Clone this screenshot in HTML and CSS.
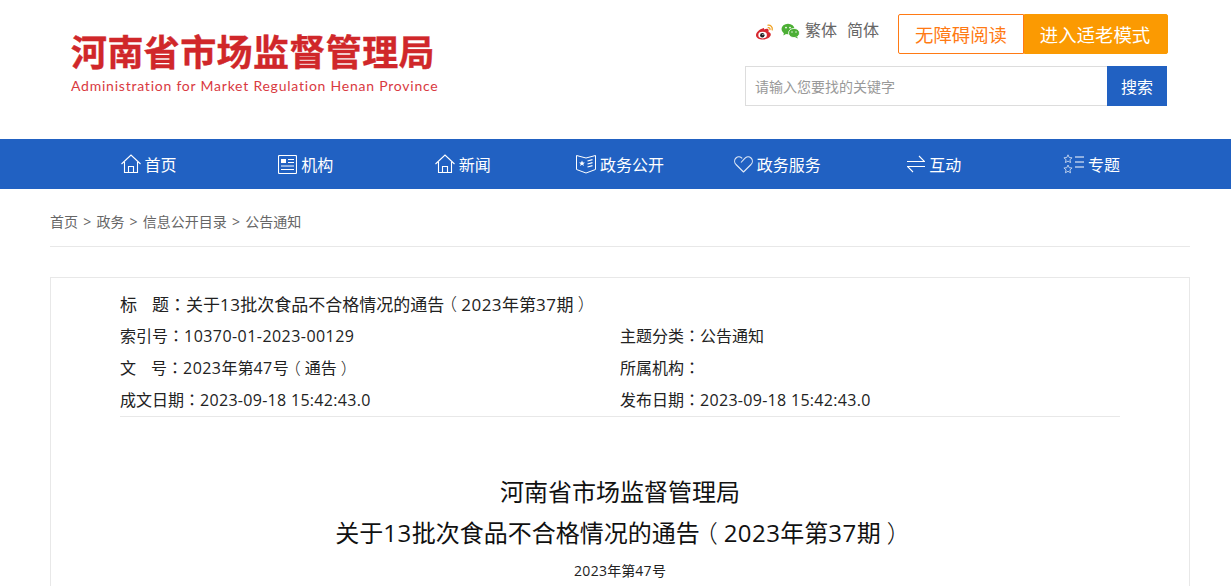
FILE: index.html
```html
<!DOCTYPE html>
<html lang="zh-CN">
<head>
    <meta charset="UTF-8">
    <title>关于13批次食品不合格情况的通告（2023年第37期）</title>
    <link rel="stylesheet" href="styles.css">
</head>
<body>
<div class="top wrap">
    <div class="logo">
        <div class="logo-cn">河南省市场监督管理局</div>
        <div class="logo-en">Administration for Market Regulation Henan Province</div>
    </div>
    <div class="tools">
        <div class="tools-row">
            <svg class="share" width="20" height="18" viewBox="0 0 20 18">
                <path d="M8.2 5.2C4.6 6 1 9.2 1 12.2c0 2.700 3.300 4.300 6.800 4.300 4.400 0 8-2.500 8-5 0-1.500-1.300-2.200-2.400-2.500.5-1.400.3-2.400-.5-2.900-1.100-.6-2.800 0-3.800.5.200-1.200-.2-1.900-.9-1.400z" fill="#d7282f"/>
                <ellipse cx="7.600" cy="12.100" rx="4.300" ry="3.300" fill="#fff"/>
                <circle cx="7.300" cy="12.200" r="2.200" fill="#222"/>
                <circle cx="7.900" cy="11.600" r=".6" fill="#fff"/>
                <path d="M13 2.200c2.700-.3 4.800 2 4.200 4.700M13.200 4.600c1.200-.2 2.100.9 1.800 2" fill="none" stroke="#f0a020" stroke-width="1.300" stroke-linecap="round"/>
            </svg>
            <svg class="share" width="19" height="16" viewBox="0 0 19 16">
                <ellipse cx="7" cy="6" rx="6.500" ry="5.300" fill="#4caf35"/>
                <path d="M3 9.500l-.6 3 3-1.800z" fill="#4caf35"/>
                <ellipse cx="13" cy="10" rx="5.500" ry="4.600" fill="#4caf35" stroke="#fff" stroke-width=".8"/>
                <path d="M16 13.500l.8 2-2.600-1.200z" fill="#4caf35"/>
                <circle cx="5" cy="4.600" r=".9" fill="#fff"/>
                <circle cx="9" cy="4.600" r=".9" fill="#fff"/>
                <circle cx="11" cy="9" r=".7" fill="#fff"/>
                <circle cx="15" cy="9" r=".7" fill="#fff"/>
            </svg>
            <a class="lang">繁体</a>
            <a class="lang">简体</a>
            <div class="modes">
                <a class="mode mode-line">无障碍阅读</a>
                <a class="mode mode-fill">进入适老模式</a>
            </div>
        </div>
        <div class="search">
            <div class="search-input">请输入您要找的关键字</div>
            <div class="search-btn">搜索</div>
        </div>
    </div>
</div>

<div class="nav">
    <div class="nav-list wrap">
        <a class="nav-item">
            <svg width="20" height="20" viewBox="0 0 20 20" fill="none" stroke="#fff" stroke-width="1.100">
                <path d="M.5 10L10 1l9.500 9M3.500 8v10.500h13V8M7.500 18.500v-6h5v6"/>
            </svg>
            <span>首页</span>
        </a>
        <a class="nav-item">
            <svg width="19" height="19" viewBox="0 0 19 19" fill="none" stroke="#fff" stroke-width="1.100">
                <rect x=".5" y=".5" width="18" height="18" rx="1"/>
                <rect x="3" y="4" width="5" height="4" fill="#fff" stroke="none"/>
                <path d="M10 4.500h6M10 7.500h6M3 11h13M3 14.500h13"/>
            </svg>
            <span>机构</span>
        </a>
        <a class="nav-item">
            <svg width="20" height="20" viewBox="0 0 20 20" fill="none" stroke="#fff" stroke-width="1.100">
                <path d="M.5 10L10 1l9.500 9M3.500 8v10.500h13V8M7.500 18.500v-6h5v6"/>
            </svg>
            <span>新闻</span>
        </a>
        <a class="nav-item">
            <svg width="20" height="20" viewBox="0 0 20 20" fill="none" stroke="#fff" stroke-width="1">
                <path d="M.5 1.500L10 4l9.500-2.500v14L10 19 .5 15.500z"/>
                <path d="M11.500 7l5-1.300M11.500 10l5-1.300M11.500 13l5-1.300" stroke-width="1.200"/>
                <path d="M6 6.500l.9 2h2l-1.600 1.400.6 2.100L6 10.800 4.100 12l.6-2.100L3.100 8.500h2z" fill="#fff" stroke="none"/>
            </svg>
            <span>政务公开</span>
        </a>
        <a class="nav-item">
            <svg width="19" height="17" viewBox="0 0 19 17" fill="none" stroke="#dfe8f6" stroke-width="1.100">
                <path d="M9.500 16L2 8.500C.2 6.500.2 3.700 2 2c1.900-1.800 4.500-1.500 6.200.3M9.500 16L17 8.500c1.800-2 1.800-4.800 0-6.500-1.900-1.800-4.500-1.500-6.200.3L7 6.500"/>
            </svg>
            <span>政务服务</span>
        </a>
        <a class="nav-item">
            <svg width="18" height="18" viewBox="0 0 18 18" fill="none" stroke="#fff" stroke-width="1.100">
                <path d="M0 6.500h17.500L12 1M18 11.500H.5L6 17"/>
            </svg>
            <span>互动</span>
        </a>
        <a class="nav-item">
            <svg width="21" height="20" viewBox="0 0 21 20" fill="none" stroke="#b9cdec" stroke-width="1">
                <path d="M5 .8l1.200 2.700 2.900.3-2.200 1.900.7 2.900L5 7.100 2.400 8.600l.7-2.900L.9 3.800l2.900-.3z"/>
                <path d="M5 11l1.200 2.700 2.900.3-2.200 1.900.7 2.900L5 17.300l-2.600 1.500.7-2.900L.9 14l2.900-.3z"/>
                <path d="M12 3h9M12 8h9M12 13h9" stroke="#fff"/>
            </svg>
            <span>专题</span>
        </a>
    </div>
</div>

<div class="crumb">
    <a>首页</a><i>&gt;</i><a>政务</a><i>&gt;</i><a>信息公开目录</a><i>&gt;</i><a>公告通知</a>
</div>

<div class="article">
    <div class="meta">
        <div class="meta-full">标<span class="gap"></span>题<span class="punct" lang="zh-TW">：</span>关于<span class="num">13</span>批次食品不合格情况的通告<span class="paren">（</span><span class="num">2023</span>年第<span class="num">37</span>期<span class="paren">）</span></div>
        <div>索引号<span class="punct" lang="zh-TW">：</span><span class="num">10370-01-2023-00129</span></div>
        <div>主题分类<span class="punct" lang="zh-TW">：</span>公告通知</div>
        <div>文<span class="gap"></span>号<span class="punct" lang="zh-TW">：</span><span class="num">2023</span>年第<span class="num">47</span>号<span class="paren">（</span>通告<span class="paren">）</span></div>
        <div>所属机构<span class="punct" lang="zh-TW">：</span></div>
        <div>成文日期<span class="punct" lang="zh-TW">：</span><span class="date">2023-09-18 15:42:43.0</span></div>
        <div>发布日期<span class="punct" lang="zh-TW">：</span><span class="date">2023-09-18 15:42:43.0</span></div>
    </div>
    <h1 class="title">河南省市场监督管理局<br>关于<span class="num">13</span>批次食品不合格情况的通告<span class="paren">（</span><span class="num">2023</span>年第<span class="num">37</span>期<span class="paren">）</span></h1>
    <p class="doc-no"><span class="date">2023</span>年第<span class="date">47</span>号</p>
</div>
</body>
</html>
```

FILE: styles.css
```css
* {
    padding: 0;
    margin: 0;
    box-sizing: border-box;
}

html, body {
    height: 586px;
    overflow: hidden;
}

body {
    background: #fff;
    color: #333;
    font-family: "Open Sans", "Noto Sans CJK SC", sans-serif;
}

.wrap {
    width: 1140px;
    margin: 0 auto;
}

.top {
    height: 139px;
    margin-left: 50px;
    display: flex;
    justify-content: space-between;
    padding: 14px 22px 0 21px;
}

.logo {
    padding-top: 13px;
}

.logo-cn {
    font-family: "Noto Sans CJK SC", sans-serif;
    font-size: 36px;
    line-height: 46px;
    font-weight: 700;
    -webkit-text-stroke: .4px #d0272a;
    letter-spacing: .4px;
    color: #d0272a;
    white-space: nowrap;
}

.logo-en {
    margin-top: 3px;
    font-family: Lato, sans-serif;
    font-size: 14px;
    line-height: 20px;
    letter-spacing: .77px;
    color: #d93a3f;
    white-space: nowrap;
}

.tools {
    width: 423px;
}

.tools-row {
    height: 40px;
    display: flex;
    align-items: flex-start;
    padding-left: 10px;
}

.share {
    margin-top: 9px;
    margin-right: 6px;
}

.lang {
    font-size: 16px;
    line-height: 32px;
    height: 32px;
    color: #666;
    margin-right: 10px;
}

.share + .lang {
    margin-left: -1px;
}

.modes {
    display: flex;
    margin-left: 9px;
    margin-right: -1px;
}

.mode {
    height: 40px;
    line-height: 39px;
    font-size: 18.4px;
    text-align: center;
    border: 1px solid #ff7a14;
}

.mode-line {
    width: 126px;
    color: #ff7a14;
    border-radius: 2px 0 0 2px;
}

.mode-fill {
    width: 144px;
    padding-right: 2px;
    color: #fff;
    background: #fb9a02;
    border-color: #fb9a02;
    border-radius: 0 2px 2px 0;
}

.search {
    display: flex;
    margin-top: 12px;
    height: 40px;
}

.search-input {
    width: 362px;
    border: 1px solid #ddd;
    border-right: 0;
    padding-left: 9px;
    font-size: 14px;
    line-height: 40px;
    color: #999;
}

.search-btn {
    width: 60px;
    background: #2161c2;
    color: #fff;
    font-size: 16px;
    line-height: 42px;
    text-align: center;
}

.nav {
    height: 50px;
    background: #2161c2;
}

.nav-list {
    margin-left: 50px;
    padding: 0 20px;
    height: 50px;
    display: flex;
}

.nav-item {
    flex: 1;
    display: flex;
    align-items: center;
    justify-content: center;
    gap: 4px;
    color: #fff;
    font-size: 16px;
}

.crumb {
    margin: 0 41px 0 50px;
    height: 58px;
    padding-top: 22px;
    border-bottom: 1px solid #e8e8e8;
    font-size: 14px;
    line-height: 22px;
    color: #666;
}

.crumb i {
    font-style: normal;
    margin: 0 5.2px;
}

.article {
    margin: 30px 41px 0 50px;
    height: 400px;
    border: 1px solid #e8e8e8;
    padding: 0 69px;
}

.meta {
    display: grid;
    grid-template-columns: 500px 500px;
    grid-auto-rows: 32px;
    padding-top: 9px;
    height: 139px;
    border-bottom: 1px solid #e8e8e8;
    font-size: 16px;
    line-height: 32px;
    color: #222;
}

.meta-full {
    grid-column: 1 / 3;
    font-size: 17px;
    white-space: nowrap;
    padding-top: 1px;
}

.gap {
    display: inline-block;
    width: 15px;
}

/* full-width punctuation sits centred in the cell */
.punct {
    font-family: "Noto Sans CJK TC", sans-serif;
}

.paren {
    font-feature-settings: "halt";
    margin: 0 .25em;
    font-weight: 300;
}

.num {
    letter-spacing: .45px;
}

.date {
    letter-spacing: .3px;
}

.title {
    margin-top: 54px;
    font-size: 24px;
    line-height: 41px;
    font-weight: 400;
    color: #111;
    text-align: center;
}

.doc-no {
    margin-top: 6px;
    font-size: 14px;
    line-height: 24px;
    color: #222;
    text-align: center;
}
```
